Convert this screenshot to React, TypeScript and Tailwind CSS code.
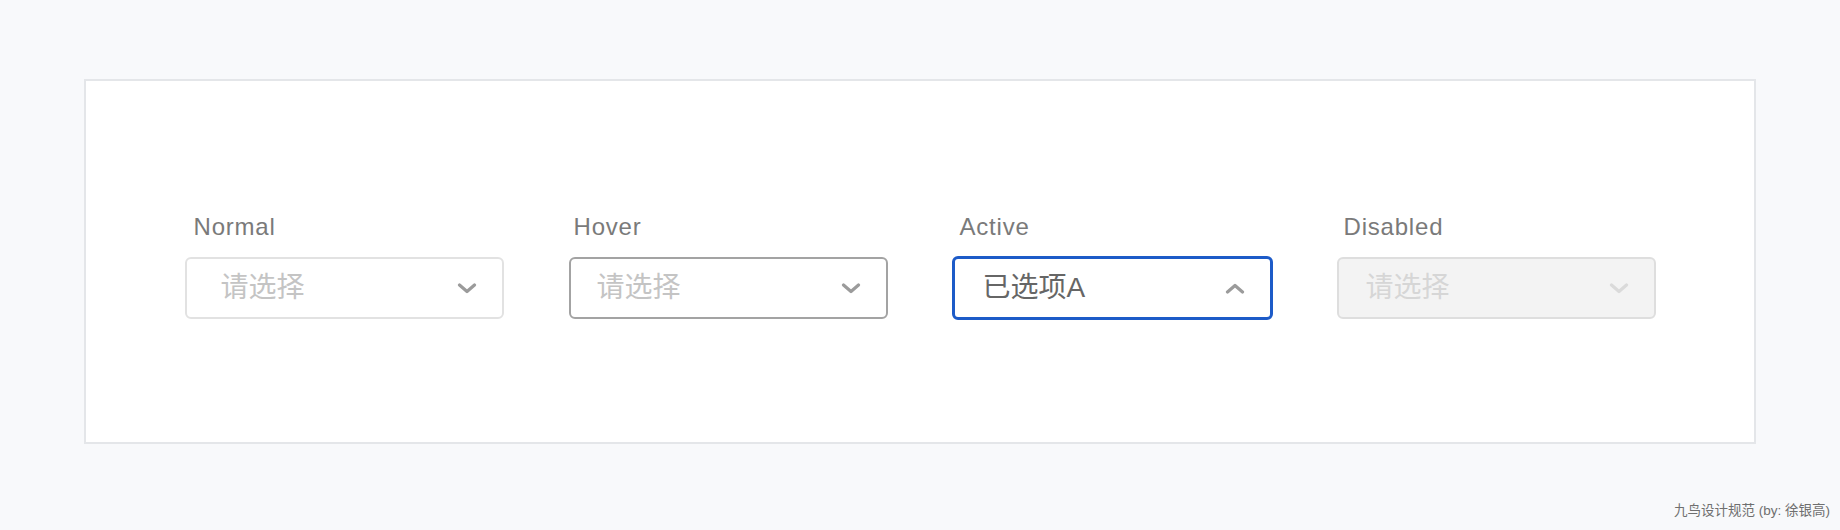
import React from "react";

type SelectState = "normal" | "hover" | "active" | "disabled";

type Item = {
  label: string;
  state: SelectState;
  value?: string;
  placeholder: string;
};

const items: Item[] = [
  { label: "Normal", state: "normal", placeholder: "请选择" },
  { label: "Hover", state: "hover", placeholder: "请选择" },
  { label: "Active", state: "active", value: "已选项A", placeholder: "请选择" },
  { label: "Disabled", state: "disabled", placeholder: "请选择" },
];

const font = {
  fontFamily: '"Liberation Sans", "Noto Sans CJK SC", sans-serif',
};

function Chevron({ up, color }: { up?: boolean; color: string }) {
  return (
    <svg width="20" height="11" viewBox="0 0 20 11" fill="none">
      <path
        d={up ? "M2.5 9 L10 2.5 L17.5 9" : "M2.5 2 L10 8.5 L17.5 2"}
        stroke={color}
        strokeWidth="3.2"
        strokeLinecap="round"
        strokeLinejoin="round"
      />
    </svg>
  );
}

function SelectBox({ item }: { item: Item }) {
  const box =
    item.state === "normal"
      ? "border-2 border-[#e2e2e2] bg-white pl-[34px]"
      : item.state === "hover"
        ? "border-2 border-[#a3a3a3] bg-white pl-[26px]"
        : item.state === "active"
          ? "border-[3px] border-[#1d5bc8] bg-white pl-[28px] -m-px h-[64px] w-[321px]"
          : "border-2 border-[#dedede] bg-[#f3f3f3] pl-[27px]";

  const labelIndent =
    item.state === "normal"
      ? "pl-[9px]"
      : item.state === "hover"
        ? "pl-[5px]"
        : "pl-[7px]";

  const textColor = item.value
    ? "text-[#666666]"
    : item.state === "disabled"
      ? "text-[#d6d6d6]"
      : "text-[#c4c4c4]";

  return (
    <div className="flex w-[319px] flex-col">
      <div
        className={`${labelIndent} text-[24px] leading-[30px] tracking-[0.8px] text-[#7a7a7a]`}
      >
        {item.label}
      </div>
      <div className="mt-[15px] flex h-[62px] w-[319px] items-center">
        <div
          className={`flex h-[62px] w-[319px] items-center justify-between rounded-[6px] pr-[25px] ${box}`}
        >
          <span className={`text-[28px] leading-none ${textColor}`}>
            {item.value ?? item.placeholder}
          </span>
          <Chevron
            up={item.state === "active"}
            color={item.state === "disabled" ? "#dadada" : "#9b9b9b"}
          />
        </div>
      </div>
    </div>
  );
}

export default function App() {
  return (
    <div className="relative h-[530px] w-full bg-[#f8f9fb] pt-[79px]" style={font}>
      <div className="mx-auto h-[365px] w-[1672px] border-2 border-[#e4e6e9] bg-white pt-[131px]">
        <div className="flex justify-center gap-[65px]">
          {items.map((item) => (
            <SelectBox key={item.label} item={item} />
          ))}
        </div>
      </div>
      <div className="absolute bottom-[9px] right-[10px] text-[13.5px] text-[#6f6f6f]">
        九鸟设计规范 (by: 徐银高)
      </div>
    </div>
  );
}
